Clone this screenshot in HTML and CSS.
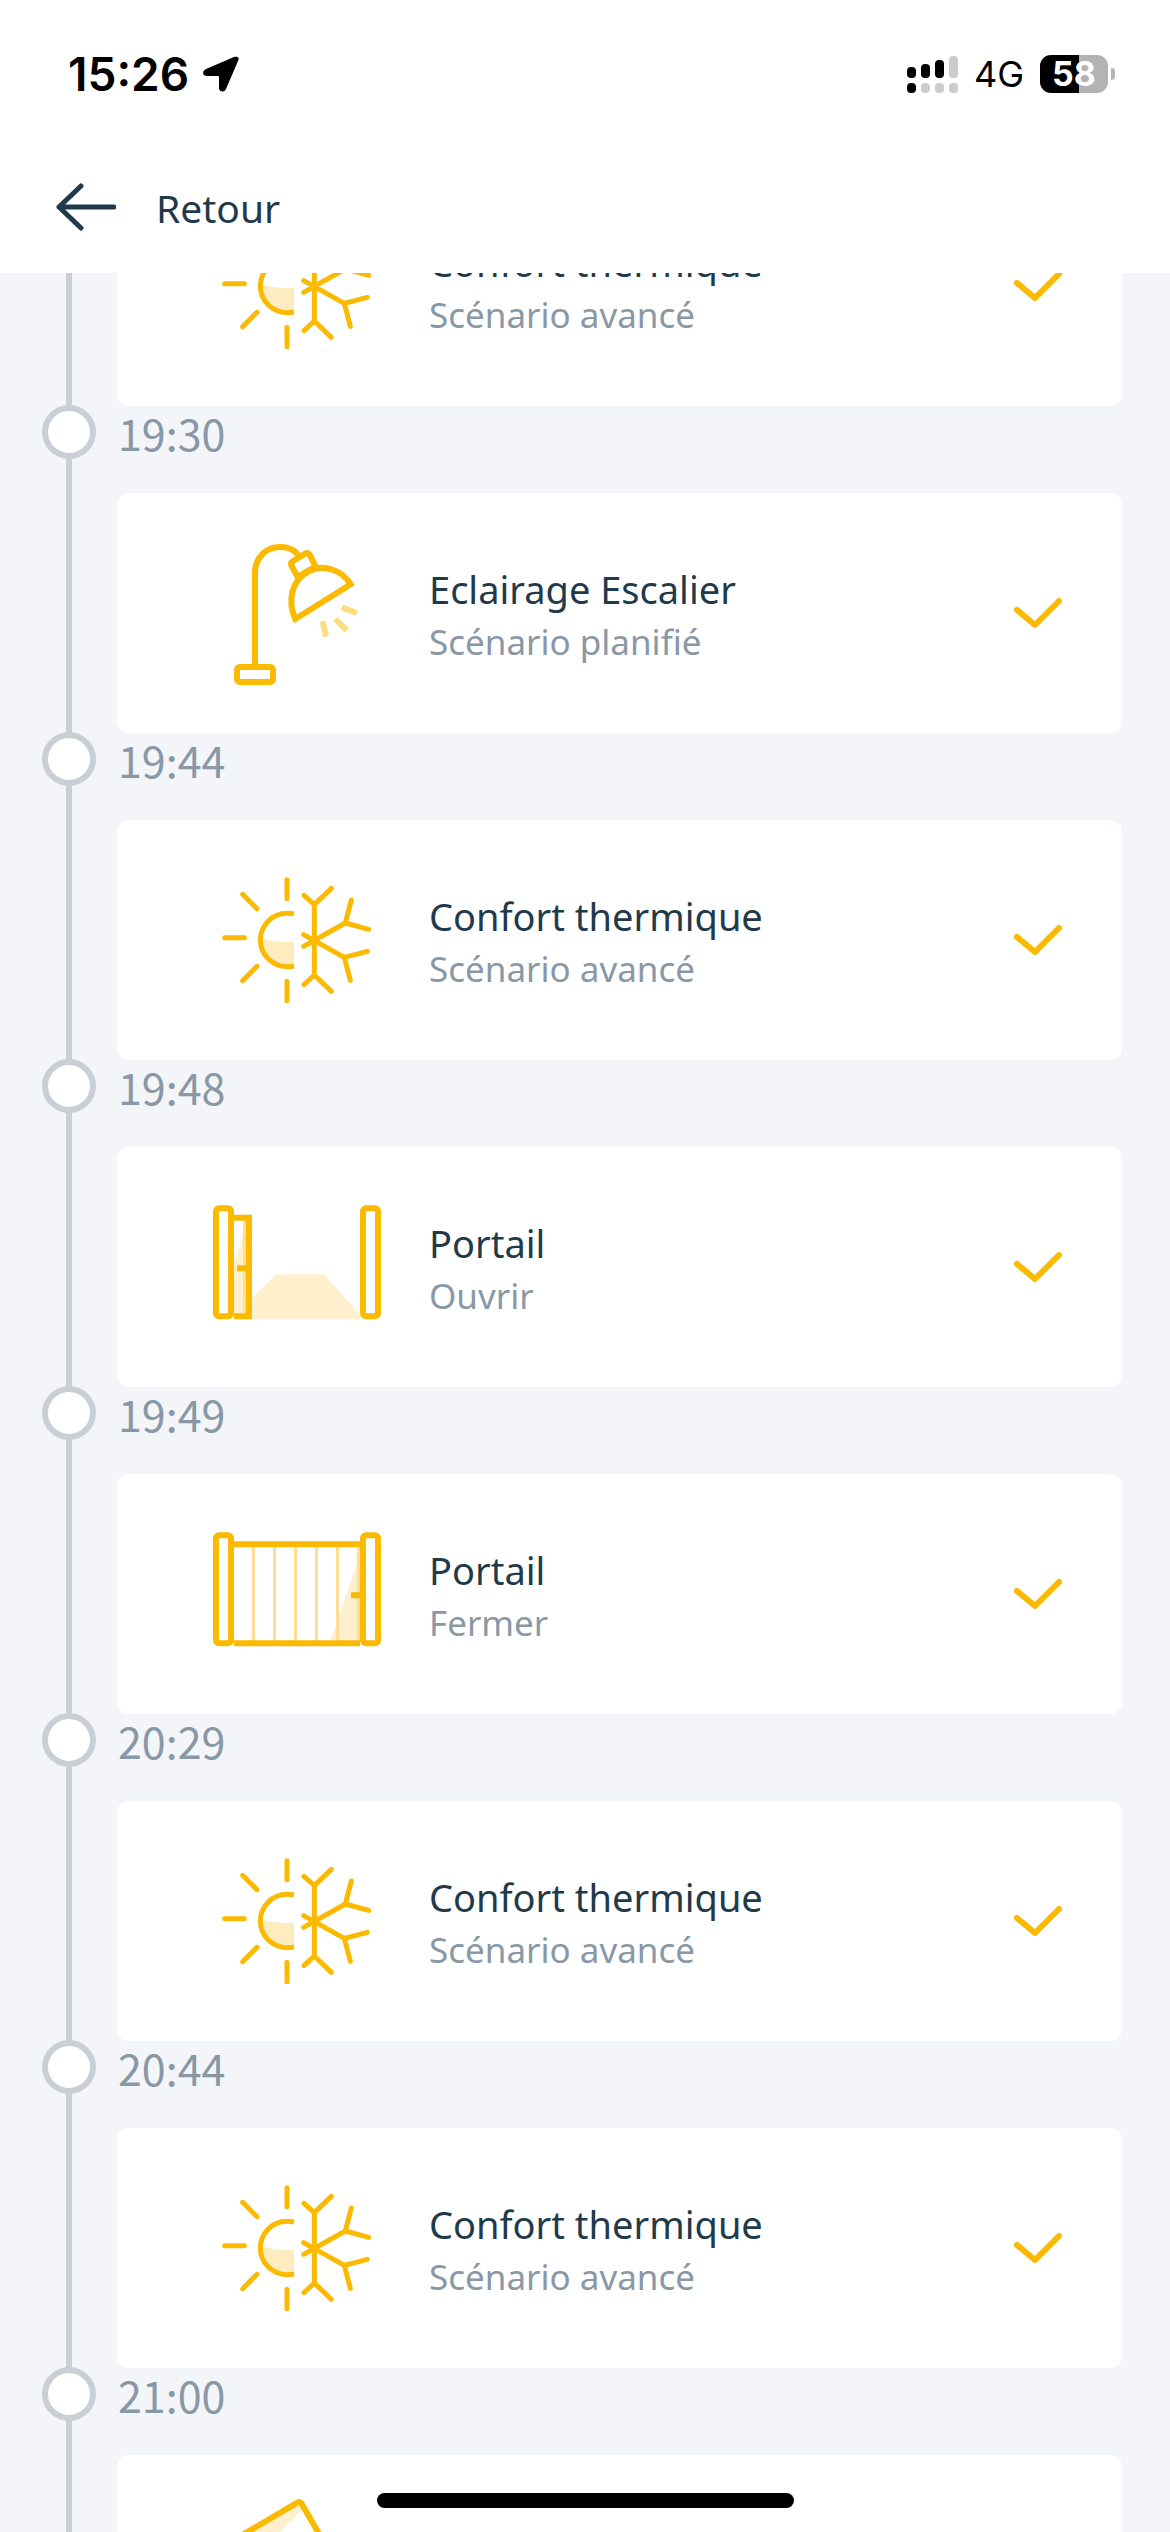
FILE: index.html
```html
<!DOCTYPE html>
<html lang="fr">
<head>
  <meta charset="UTF-8">
  <meta name="viewport" content="width=device-width">
  <title>Historique</title>
  <link rel="stylesheet" href="styles.css">
</head>
<body>

<!-- icons, used below -->
<svg class="sprite" aria-hidden="true">
  <symbol id="check" viewBox="0 0 48 30">
    <path class="line" stroke-width="6" stroke-linecap="round" stroke-linejoin="round" d="M3 12l18 15L45 3"/>
  </symbol>

  <symbol id="thermal" viewBox="21 -30 540 540">
    <path class="pale" d="M184 236q54 12 98 10v70q-96 14-98-80z"/>
    <path class="line" stroke-width="15" d="M282 162q-10-2-21-2a80 80 0 0 0 0 160q11 0 21-2"/>
    <path class="line" stroke-width="15" stroke-linecap="round" stroke-linejoin="round" d="M261 59v57M261 364v58M74 233h59M128 103l43 43M128 362l43-43M343 133v213M312 106l31 28 51-49M312 374l31-29 51 49M311 259l125-70M454 120l-18 69 70 19M311 224l122 68M502 274l-69 18 18 69"/>
  </symbol>

  <symbol id="lamp" viewBox="21 9 540 540">
    <path class="line" stroke-width="18" d="M165 440V158c0-44 32-77 75-77 26 0 48 10 57 30"/>
    <rect class="line" stroke-width="18" x="111" y="441" width="108" height="45" rx="8"/>
    <path class="line" stroke-width="18" stroke-linejoin="round" d="M295 175l-20-37q-5-9 3-14l37-23q9-5 14 3l19 38"/>
    <path class="line" stroke-width="18" d="M297 168l51-30"/>
    <path class="line" stroke-width="18" d="M286 297c-24-52-13-116 40-143 48-25 102-1 126 39z"/>
    <path class="line rays" stroke-width="18" d="M426 262l45 17M406 297l34 34M368 303l10 47"/>
  </symbol>

  <symbol id="gate-open" viewBox="21 -39 540 540">
    <path class="path" d="M157 324l72-71h144l107 123v12H157zM102 217l27-82v236h-27z"/>
    <path class="slat" d="M129 92h9v280h-9z"/>
    <path class="line" stroke-width="18" d="M102 83h45v296h-45M111 235h36"/>
    <rect class="line" stroke-width="18" x="48" y="55" width="45" height="324" rx="9"/>
    <rect class="line" stroke-width="18" x="489" y="55" width="45" height="324" rx="9"/>
  </symbol>

  <symbol id="gate-closed" viewBox="21 -18 540 540">
    <path class="path" d="M393 391l78-231h9v231z"/>
    <path class="slat" d="M156 112h9v280h-9zM219 112h9v280h-9zM282 112h9v280h-9zM345 112h9v280h-9zM408 112h9v280h-9zM471 112h9v280h-9z"/>
    <path class="line" stroke-width="18" d="M102 103h378M102 400h378M453 256h36"/>
    <rect class="line" stroke-width="18" x="48" y="76" width="45" height="324" rx="9"/>
    <rect class="line" stroke-width="18" x="489" y="76" width="45" height="324" rx="9"/>
  </symbol>

  <symbol id="panel" viewBox="621 435 540 540">
    <path class="path" d="M899 492l12 12-171 171-110-30z"/>
    <path class="line" stroke-width="18" stroke-linejoin="round" d="M640 636l252-148q8-4 13 3l120 208"/>
  </symbol>
</svg>

<header class="header">
  <div class="status">
    <div class="status-left">
      <span class="clock">15:26</span>
      <svg class="location" viewBox="0 0 36 36"><path d="M31 1L3 13c-4 2-4 7 1 7h11q1 0 1 1v11c0 4 5 5 7 1L35 5c2-4-1-5-4-4z"/></svg>
    </div>
    <div class="status-right">
      <svg class="signal" viewBox="0 0 51 37">
        <rect x="0" y="11" width="9" height="11" rx="4"/>
        <rect x="14" y="8" width="9" height="14" rx="4"/>
        <rect x="28" y="4" width="9" height="18" rx="4"/>
        <rect class="off" x="42" y="0" width="9" height="22" rx="4"/>
        <rect x="0" y="27" width="9" height="10" rx="4"/>
        <rect class="off" x="14" y="27" width="9" height="10" rx="4"/>
        <rect class="off" x="28" y="27" width="9" height="10" rx="4"/>
        <rect class="off" x="42" y="27" width="9" height="10" rx="4"/>
      </svg>
      <span class="network">4G</span>
      <div class="battery">58</div>
    </div>
  </div>
  <a class="back" href="#">
    <svg class="arrow" viewBox="0 0 60 48"><path d="M58 24H3M25 3L3 24l22 21"/></svg>
    <span>Retour</span>
  </a>
</header>

<main class="feed">
  <ol class="timeline">
    <li>
      <div class="card">
        <svg class="icon"><use href="#thermal"/></svg>
        <div class="text">
          <h2>Confort thermique</h2>
          <p>Scénario avancé</p>
        </div>
        <svg class="check"><use href="#check"/></svg>
      </div>
    </li>
    <li>
      <time class="moment">19:30</time>
      <div class="card">
        <svg class="icon"><use href="#lamp"/></svg>
        <div class="text">
          <h2>Eclairage Escalier</h2>
          <p>Scénario planifié</p>
        </div>
        <svg class="check"><use href="#check"/></svg>
      </div>
    </li>
    <li>
      <time class="moment">19:44</time>
      <div class="card">
        <svg class="icon"><use href="#thermal"/></svg>
        <div class="text">
          <h2>Confort thermique</h2>
          <p>Scénario avancé</p>
        </div>
        <svg class="check"><use href="#check"/></svg>
      </div>
    </li>
    <li>
      <time class="moment">19:48</time>
      <div class="card">
        <svg class="icon"><use href="#gate-open"/></svg>
        <div class="text">
          <h2>Portail</h2>
          <p>Ouvrir</p>
        </div>
        <svg class="check"><use href="#check"/></svg>
      </div>
    </li>
    <li>
      <time class="moment">19:49</time>
      <div class="card">
        <svg class="icon"><use href="#gate-closed"/></svg>
        <div class="text">
          <h2>Portail</h2>
          <p>Fermer</p>
        </div>
        <svg class="check"><use href="#check"/></svg>
      </div>
    </li>
    <li>
      <time class="moment">20:29</time>
      <div class="card">
        <svg class="icon"><use href="#thermal"/></svg>
        <div class="text">
          <h2>Confort thermique</h2>
          <p>Scénario avancé</p>
        </div>
        <svg class="check"><use href="#check"/></svg>
      </div>
    </li>
    <li>
      <time class="moment">20:44</time>
      <div class="card">
        <svg class="icon"><use href="#thermal"/></svg>
        <div class="text">
          <h2>Confort thermique</h2>
          <p>Scénario avancé</p>
        </div>
        <svg class="check"><use href="#check"/></svg>
      </div>
    </li>
    <li>
      <time class="moment">21:00</time>
      <div class="card">
        <svg class="icon"><use href="#panel"/></svg>
      </div>
    </li>
  </ol>
</main>

<div class="home-bar"></div>

</body>
</html>
```
FILE: styles.css
```css
*,
*::before,
*::after {
  margin: 0;
  padding: 0;
  box-sizing: border-box;
}

body {
  display: flex;
  flex-direction: column;
  height: 100vh;
  overflow: hidden;
  background-color: #f3f5f9;
  color: #1f3a4a;
  font-family: "Noto Sans", sans-serif;
}

.sprite {
  display: none;
}

/* header */
.header {
  flex: none;
  padding-bottom: 7px;
  background-color: #fff;
}

.status {
  display: flex;
  justify-content: space-between;
  align-items: center;
  height: 148px;
  padding: 0 55px 0 68px;
  color: #000;
  font-family: Inter, sans-serif;
}

.status-left,
.status-right {
  display: flex;
  align-items: center;
}

.status-left {
  gap: 14px;
}

.status-right {
  gap: 16px;
}

.clock {
  font-size: 46px;
  font-weight: 600;
}

.location {
  width: 36px;
  height: 36px;
}

.signal {
  width: 51px;
  height: 37px;
}

.signal .off {
  fill: #ccc;
}

.network {
  font-size: 36px;
}

.battery {
  position: relative;
  width: 68px;
  height: 38px;
  margin-right: 7px;
  border-radius: 11px;
  background: linear-gradient(to right, #000 58%, #b3b3b3 58%);
  color: #fff;
  font-size: 34px;
  font-weight: 700;
  line-height: 38px;
  text-align: center;
}

.battery::after {
  content: "";
  position: absolute;
  top: 13px;
  right: -7px;
  width: 4px;
  height: 12px;
  border-radius: 0 4px 4px 0;
  background-color: #b3b3b3;
}

.back {
  display: flex;
  align-items: center;
  gap: 40px;
  height: 118px;
  padding: 0 56px;
  color: #1f3a4a;
  font-size: 39px;
  text-decoration: none;
}

.arrow {
  width: 60px;
  height: 48px;
  fill: none;
  stroke: #1f3a4a;
  stroke-width: 5;
  stroke-linecap: round;
  stroke-linejoin: round;
}

/* list, scrolled part way through its first item */
.feed {
  flex: 1;
  overflow: hidden;
}

.timeline {
  margin-top: -107px;
  padding: 0 48px 0 117px;
  list-style: none;
  background: linear-gradient(#c9cfd6, #c9cfd6) 66px 0 / 6px 100% no-repeat;
}

.moment {
  display: flex;
  align-items: center;
  gap: 22px;
  height: 87px;
  margin-left: -75px;
  padding-bottom: 35px;
  color: #8998a6;
  font-family: "Noto Sans CJK SC", sans-serif;
  font-size: 43px;
}

.moment::before {
  content: "";
  width: 54px;
  height: 54px;
  border: 6px solid #c9cfd4;
  border-radius: 50%;
  background-color: #fff;
}

.card {
  display: flex;
  align-items: center;
  height: 240px;
  padding: 0 60px 0 90px;
  border-radius: 12px;
  background-color: #fff;
}

.icon {
  width: 180px;
  height: 180px;
}

.text {
  flex: 1;
  padding: 4px 0 0 42px;
}

.text h2 {
  font-size: 38px;
  font-weight: 400;
  line-height: 50px;
}

.text p {
  margin-top: 3px;
  color: #8998a6;
  font-size: 35px;
  line-height: 50px;
}

.check {
  width: 48px;
  height: 30px;
}

/* icon colours */
.line {
  fill: none;
  stroke: #fbb900;
}

.pale {
  fill: #fdecc0;
}

.path {
  fill: #fff0cd;
}

.slat {
  fill: #ffdd93;
}

.rays {
  stroke: #fddc80;
}

.home-bar {
  position: fixed;
  bottom: 24px;
  left: 50%;
  width: 417px;
  height: 15px;
  margin-left: -208px;
  border-radius: 8px;
  background-color: #000;
}
```
